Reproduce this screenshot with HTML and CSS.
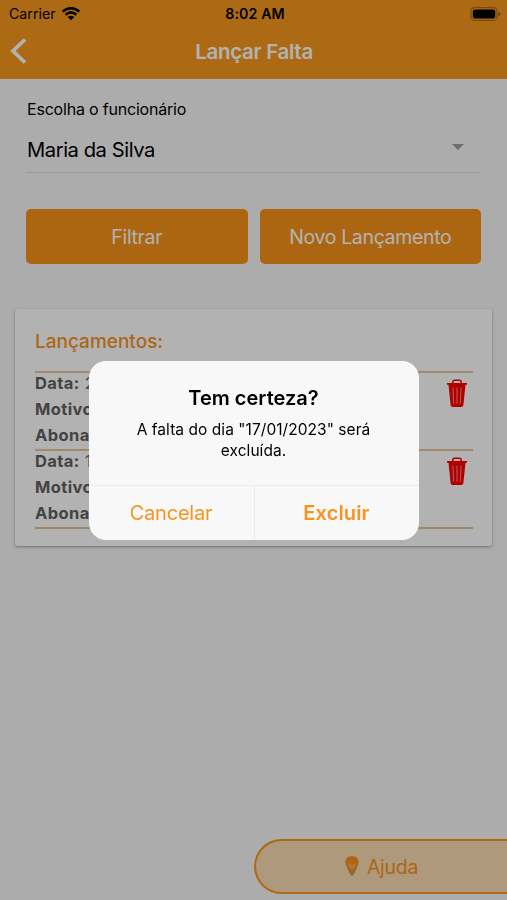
FILE: index.html
```html
<!DOCTYPE html>
<html lang="pt-BR">
  <head>
    <meta charset="UTF-8" />
    <meta name="viewport" content="width=device-width, initial-scale=1.0" />
    <title>Lançar Falta</title>
    <link rel="stylesheet" href="styles.css">
  </head>
  <body>
    <div class="app">
      <header class="header">
        <div class="status-bar">
          <div class="carrier">
            <span class="carrier-name">Carrier</span>
            <svg class="wifi" width="18" height="14" viewBox="0 0 18 14">
              <path d="M.6 4.6Q9-2.2 17.4 4.6M3.6 7.7Q9 3.1 14.4 7.7" fill="none" stroke="#000" stroke-width="2.5" />
              <path d="M5.8 9.9Q9 7.4 12.2 9.9L9 13.2Z" />
            </svg>
          </div>
          <span class="clock">8:02 AM</span>
          <svg class="battery" width="31" height="14" viewBox="0 0 31 14">
            <rect x="1" y=".7" width="26" height="12.6" rx="3.6" fill="none" stroke="#000" stroke-opacity=".3" stroke-width="1.2" />
            <rect x="2.8" y="2.5" width="22.4" height="9" rx="2" />
            <path d="M28.4 4.8Q30.4 5.3 30.4 7T28.4 9.2Z" fill-opacity=".35" />
          </svg>
        </div>
        <div class="nav-bar">
          <svg class="back" width="17" height="26" viewBox="0 0 17 26">
            <path d="M15 1.5L3 13L15 24.5" fill="none" stroke="#fff" stroke-width="3.8" />
          </svg>
          <h1 class="title">Lançar Falta</h1>
        </div>
      </header>

      <main class="content">
        <section class="filter">
          <label class="label">Escolha o funcionário</label>
          <div class="select">
            <span class="select-value">Maria da Silva</span>
            <span class="arrow"></span>
          </div>
          <div class="buttons">
            <button class="btn filtrar">Filtrar</button>
            <button class="btn novo">Novo Lançamento</button>
          </div>
        </section>

        <section class="card">
          <h2 class="card-title">Lançamentos:</h2>
          <div class="item">
            <div class="item-text">
              <p><b>Data:</b> 20/01/2023</p>
              <p><b>Motivo:</b></p>
              <p><b>Abonada:</b></p>
            </div>
            <svg class="trash" width="20" height="29" viewBox="0 0 20 29">
              <path d="M5.8 4.5V3Q5.8 1.2 7.6 1.2H12.4Q14.2 1.2 14.2 3V4.5" fill="none" stroke="#fc0000" stroke-width="1.5" />
              <path d="M0 4H20V5.8H18.5L16.4 26Q16.2 28 14.3 28H5.7Q3.8 28 3.6 26L1.5 5.8H0Z" fill="#fc0000" />
              <path d="M6 8.5L6.7 24.7M10 8.5V24.7M14 8.5L13.3 24.7" stroke="#ff8080" stroke-width="1.1" />
            </svg>
          </div>
          <div class="item">
            <div class="item-text">
              <p><b>Data:</b> 17/01/2023</p>
              <p><b>Motivo:</b></p>
              <p><b>Abonada:</b></p>
            </div>
            <svg class="trash" width="20" height="29" viewBox="0 0 20 29">
              <path d="M5.8 4.5V3Q5.8 1.2 7.6 1.2H12.4Q14.2 1.2 14.2 3V4.5" fill="none" stroke="#fc0000" stroke-width="1.5" />
              <path d="M0 4H20V5.8H18.5L16.4 26Q16.2 28 14.3 28H5.7Q3.8 28 3.6 26L1.5 5.8H0Z" fill="#fc0000" />
              <path d="M6 8.5L6.7 24.7M10 8.5V24.7M14 8.5L13.3 24.7" stroke="#ff8080" stroke-width="1.1" />
            </svg>
          </div>
        </section>
      </main>

      <div class="help">
        <svg class="bulb" width="14" height="20" viewBox="0 0 14 20">
          <path d="M7 0C3 0 .3 2.8 .3 6.3C.3 9 1.6 10.8 2.6 13L4.6 17.5L7 20L9.4 17.5L11.4 13C12.4 10.8 13.7 9 13.7 6.3C13.7 2.8 11 0 7 0Z" fill="#f7931e" />
          <path d="M3.4 13.5H10.6L9 17.5L7 19.5L5 17.5Z" fill="#cf9a45" />
          <path d="M4.2 7.5L6.4 13M9.8 7.5L7.6 13M5 8.8L7 10L9 8.8" fill="none" stroke="#fbc98c" stroke-width=".8" />
        </svg>
        <span class="help-text">Ajuda</span>
      </div>
    </div>

    <div class="overlay">
      <div class="dialog">
        <div class="dialog-body">
          <h3 class="dialog-title">Tem certeza?</h3>
          <p class="dialog-text">A falta do dia "17/01/2023" será<br>excluída.</p>
        </div>
        <div class="dialog-actions">
          <button class="action cancel">Cancelar</button>
          <button class="action confirm">Excluir</button>
        </div>
      </div>
    </div>
  </body>
</html>
```

FILE: styles.css
```css
* {
  box-sizing: border-box;
  margin: 0;
  padding: 0;
}
body {
  font-family: Inter, 'Liberation Sans', sans-serif;
  color: #000;
  background-color: #f6f6f6;
  overflow: hidden;
}
button {
  border: none;
  background: none;
  font-family: inherit;
}
.app {
  height: 900px;
  display: flex;
  flex-direction: column;
}

/* header */
.header {
  height: 79px;
  background-color: #f7981d;
}
.status-bar {
  height: 27px;
  padding: 0 6px 0 9px;
  display: grid;
  grid-template-columns: 1fr auto 1fr;
  align-items: center;
}
.carrier {
  display: flex;
  align-items: center;
  gap: 6px;
}
.carrier-name {
  font-size: 14.2px;
}
.clock {
  font-size: 14.2px;
  font-weight: 600;
  letter-spacing: 0.1px;
}
.battery {
  justify-self: end;
}
.nav-bar {
  height: 48px;
  padding: 0 10px;
  display: grid;
  grid-template-columns: 17px 1fr 17px;
  align-items: center;
}
.title {
  padding: 1px 0 0 1px;
  color: #fff;
  font-size: 20.5px;
  font-weight: 600;
  letter-spacing: -0.3px;
  text-align: center;
}

/* filter */
.content {
  flex: 1;
}
.filter {
  padding: 20px 26px 0;
}
.label {
  display: block;
  padding-left: 1px;
  font-size: 16px;
  letter-spacing: -0.2px;
  line-height: 20px;
}
.select {
  height: 54px;
  padding: 6px 17px 0 1px;
  display: flex;
  align-items: center;
  justify-content: space-between;
  border-bottom: 1px solid #dedede;
}
.select-value {
  padding-top: 1px;
  font-size: 20.2px;
  letter-spacing: -0.45px;
}
.arrow {
  margin-bottom: 3px;
  border: 6px solid transparent;
  border-top-color: #9c9c9c;
  border-bottom: none;
}
.buttons {
  display: grid;
  grid-template-columns: 1fr 1fr;
  gap: 12px;
  margin-top: 36px;
}
.btn {
  height: 55px;
  border-radius: 5px;
  background-color: #f7931a;
  color: #fff;
  font-size: 19.5px;
  letter-spacing: -0.35px;
}

/* card */
.card {
  height: 237px;
  margin: 45px 15px 0;
  padding: 21px 19px 0 20px;
  background-color: #fff;
  border-radius: 2px;
  box-shadow: 0 1px 3px rgba(0, 0, 0, 0.35);
}
.card-title {
  height: 41px;
  color: #f7931e;
  font-size: 19px;
  font-weight: 500;
  line-height: 24px;
}
.item {
  height: 78px;
  display: flex;
  justify-content: space-between;
  border-top: 2px solid #eac49a;
}
.item:last-child {
  height: 80px;
  border-bottom: 2px solid #dfc292;
}
.item-text {
  margin-top: -2px;
  color: #606060;
  font-size: 16.5px;
  letter-spacing: 0.4px;
  line-height: 25.8px;
}
.trash {
  margin: 6px 6px 0 0;
}

/* help */
.help {
  align-self: flex-end;
  width: 253px;
  height: 55px;
  margin-bottom: 6px;
  display: flex;
  align-items: center;
  justify-content: center;
  gap: 8px;
  border: 2px solid #f7981d;
  border-right: none;
  border-radius: 28px 0 0 28px;
  background-color: #fbdbb2;
  color: #f7931e;
}
.bulb {
  margin-bottom: 2px;
}
.help-text {
  padding-top: 1px;
  font-size: 19.5px;
  letter-spacing: -0.3px;
}

/* dialog */
.overlay {
  position: fixed;
  inset: 0;
  display: flex;
  align-items: center;
  justify-content: center;
  background-color: rgba(0, 0, 0, 0.3);
}
.dialog {
  width: 330px;
  height: 179px;
  border-radius: 17px;
  background-color: #f8f8f8;
  text-align: center;
  overflow: hidden;
}
.dialog-body {
  height: 124px;
  padding-top: 24px;
}
.dialog-title {
  font-size: 20px;
  font-weight: 600;
  line-height: 26px;
}
.dialog-text {
  margin-top: 8px;
  font-size: 15.5px;
  letter-spacing: 0.05px;
  line-height: 21px;
}
.dialog-actions {
  height: 55px;
  display: grid;
  grid-template-columns: 1fr 1fr;
  border-top: 1px solid #ececec;
}
.action {
  color: #f7931e;
  font-size: 20px;
}
.cancel {
  letter-spacing: -0.2px;
}
.confirm {
  border-left: 1px solid #ececec;
  font-weight: 600;
  letter-spacing: 0.15px;
}
```
